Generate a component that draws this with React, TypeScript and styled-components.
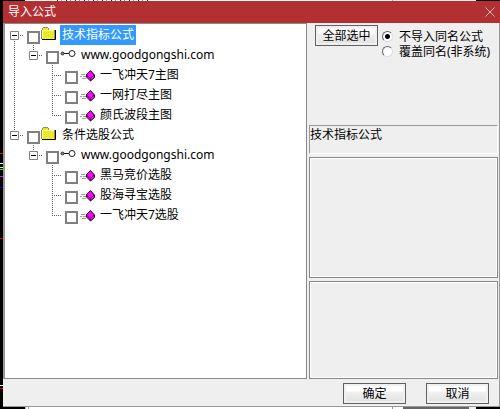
import React, { useState } from "react";
import styled, { createGlobalStyle, css } from "styled-components";

const GlobalStyle = createGlobalStyle`
  * { box-sizing: border-box; }
  body { margin: 0; background: #000; }
  body, button, input { font: 12px/20px "Noto Sans", "Noto Sans CJK SC", sans-serif; color: #000; }
`;

const Desktop = styled.div`
  display: grid;
  min-height: 100vh;
  padding: 1px 0 2px 3px;
  background:
    linear-gradient(#f00, #f00) 0 153px / 3px 1px,
    linear-gradient(#fff, #fff) 0 163px / 3px 1px,
    linear-gradient(#ff0, #ff0) 0 167px / 3px 1px,
    linear-gradient(#0f0, #0f0) 0 169px / 3px 1px,
    linear-gradient(#f0f, #f0f) 0 176px / 3px 1px,
    linear-gradient(#00f, #00f) 0 187px / 3px 1px,
    linear-gradient(#d00, #d00) 0 238px / 3px 1px,
    linear-gradient(#fff, #fff) 0 385px / 3px 1px,
    linear-gradient(#d00, #d00) 0 388px / 3px 1px,
    linear-gradient(90deg, #000 25px, #999 25px 26px, #fff 26px 28px, #999 28px 29px, #fff 29px 392px, #999 392px 393px, #fff 393px 403px, #666 403px 469px, #eee 469px 476px, #000 476px) 0 100% / 100% 2px,
    repeating-linear-gradient(90deg, #222 0 1px, #fff 1px 4px, #69c 4px 5px, #fff 5px 9px) 57px 0 / 91px 1px,
    linear-gradient(90deg, #000 25px, #fff 25px 392px, #999 392px 393px, #eee 393px 476px, #000 476px) 0 0 / 100% 1px,
    #000;
  background-repeat: no-repeat;
`;

const Dialog = styled.section`
  display: grid;
  grid-template-rows: 22px 1fr 27px;
  background: #efefef;
  border: solid #999;
  border-width: 0 1px 1px 0;
`;

const TitleBar = styled.header`
  display: flex;
  align-items: center;
  justify-content: space-between;
  margin-right: -1px;
  padding: 0 5px;
  background: #b22f32;
  color: #fff;
`;

const Title = styled.h1`
  margin: 0;
  font-size: 12px;
  font-weight: 400;
`;

const CloseButton = styled.button`
  display: flex;
  padding: 0;
  border: 0;
  background: none;
`;

const Body = styled.div`
  display: grid;
  grid-template-columns: minmax(0, 304fr) minmax(0, 192fr);
`;

const Tree = styled.ul`
  margin: 0;
  padding: 1px 0 0;
  list-style: none;
  background: #fff;
  border: 1px solid #888;
  border-left: 2px solid #999;
`;

const Row = styled.li`
  display: flex;
  height: 20px;
`;

const dotsV = "repeating-linear-gradient(#606060 0 1px, transparent 1px 2px)";
const dotsH = "repeating-linear-gradient(90deg, #606060 0 1px, transparent 1px 2px)";

type Line = "none" | "through" | "tee" | "corner" | "start";

const Guide = styled.span<{ $line: Line }>`
  display: flex;
  align-items: center;
  justify-content: center;
  width: 19px;
  flex: none;
  background-repeat: no-repeat;
  ${({ $line }) => $line === "through" && css`background-image: ${dotsV}; background-size: 1px 20px; background-position: 9px 0;`}
  ${({ $line }) => $line === "tee" && css`background-image: ${dotsV}, ${dotsH}; background-size: 1px 20px, 10px 1px; background-position: 9px 0, 9px 10px;`}
  ${({ $line }) => $line === "corner" && css`background-image: ${dotsV}, ${dotsH}; background-size: 1px 10px, 10px 1px; background-position: 9px 0, 9px 10px;`}
  ${({ $line }) => $line === "start" && css`background-image: ${dotsV}, ${dotsH}; background-size: 1px 10px, 10px 1px; background-position: 9px 10px, 9px 10px;`}
`;

const Expander = styled.button`
  display: flex;
  padding: 0;
  border: 0;
  background: none;
`;

const Check = styled.input`
  appearance: none;
  flex: none;
  width: 13px;
  height: 13px;
  margin: 6px 1px 0 3px;
  border: 2px solid #808080;
  background: #fff;
  &:checked { background: #808080; }
`;

const NodeIcon = styled.span`
  display: flex;
  flex: none;
  width: 19px;
  height: 20px;
`;

const NodeLabel = styled.label<{ $selected?: boolean }>`
  padding: 0 2px;
  white-space: nowrap;
  ${({ $selected }) => $selected && css`background: #3399ff; color: #fff;`}
`;

const Side = styled.div`
  display: grid;
  grid-template-rows: 99px 29px 122fr 98fr;
  padding: 0 1px 0 2px;
  row-gap: 3px;
`;

const Options = styled.div`
  display: flex;
  align-items: flex-start;
  padding: 2px 0 0 6px;
`;

const PushButton = styled.button`
  flex: none;
  width: 63px;
  height: 21px;
  padding: 0;
  line-height: 17px;
  border: 1px solid #606060;
  background: linear-gradient(#fff 0 35%, #f0f0f0 45%, #e0e0e0);
  box-shadow: inset 0 0 0 2px #f0f0f0;
`;

const RadioList = styled.div`
  display: grid;
  grid-auto-rows: 15px;
  margin: 4px 0 0 4px;
`;

const RadioLabel = styled.label`
  display: flex;
  align-items: center;
  gap: 6px;
  line-height: 15px;
  white-space: nowrap;
`;

const Radio = styled.input`
  appearance: none;
  flex: none;
  width: 11px;
  height: 11px;
  margin: 0;
  border: 1px solid;
  border-color: #606060 #ddd #ddd #606060;
  border-radius: 50%;
  background: #fff;
  &:checked { background: radial-gradient(circle, #000 0 2px, #fff 3px); }
`;

const GroupName = styled.output`
  display: block;
  line-height: 18px;
  border: 1px solid;
  border-color: #999 #fff #fff #999;
`;

const Pane = styled.div`
  border: 1px solid #888;
  box-shadow: inset 0 0 0 1px #fff;
`;

const Footer = styled.footer`
  display: flex;
  align-items: center;
  justify-content: flex-end;
  gap: 20px;
  padding: 1px 10px 0 0;
`;

const Folder = () => (
  <svg width="16" height="20" aria-hidden="true">
    <path d="M0 5h1V3h1V2h5v1h1v2h6v9H0z" fill="#8c8c70" />
    <path d="M2 3h5v2H2zM1 5h12v9H1z" fill="#f4f400" />
    <path d="M3 7.500h10M3 9.500h10M3 11.500h10M3 3.500h4" stroke="#d6d670" strokeDasharray="1 1" />
    <path d="M2 8.500h11M2 10.500h11M2 12.500h11" stroke="#e6e648" strokeDasharray="1 1" />
    <path d="M1.500 13V5.500H13" fill="none" stroke="#ffffb0" />
    <path d="M1 14.500h13.500V5" fill="none" stroke="#000" />
  </svg>
);

const Link = () => (
  <svg width="16" height="20" aria-hidden="true">
    <path d="M3 8.500h7" stroke="#111" fill="none" />
    <circle cx="2.500" cy="8.500" r="1.500" fill="#888" stroke="#333" />
    <circle cx="12" cy="8.500" r="3" fill="#fff" stroke="#222" />
  </svg>
);

const Gem = () => (
  <svg width="17" height="20" aria-hidden="true">
    <path d="M2 9.500h4M1 11.500h2M4 11.500h3M3 13.500h4" stroke="#999" />
    <path d="M11.500 5.500l4 4.500v2.500l-4 3.500-4-4V9.500z" fill="#ff00ff" stroke="#200020" />
    <path d="M8 10.500l3.500 3 3.500-3.500M11.500 13.500v2.500" fill="none" stroke="#600060" />
  </svg>
);

const icons = { folder: Folder, link: Link, gem: Gem };

type Node = { id: string; text: string; icon: keyof typeof icons; guides: Line[]; open?: boolean };

const nodes: Node[] = [
  { id: "a", text: "技术指标公式", icon: "folder", guides: ["start"], open: true },
  { id: "a0", text: "www.goodgongshi.com", icon: "link", guides: ["through", "corner"], open: true },
  { id: "a1", text: "一飞冲天7主图", icon: "gem", guides: ["through", "none", "tee"] },
  { id: "a2", text: "一网打尽主图", icon: "gem", guides: ["through", "none", "tee"] },
  { id: "a3", text: "颜氏波段主图", icon: "gem", guides: ["through", "none", "corner"] },
  { id: "b", text: "条件选股公式", icon: "folder", guides: ["corner"], open: true },
  { id: "b0", text: "www.goodgongshi.com", icon: "link", guides: ["none", "corner"], open: true },
  { id: "b1", text: "黑马竞价选股", icon: "gem", guides: ["none", "none", "tee"] },
  { id: "b2", text: "股海寻宝选股", icon: "gem", guides: ["none", "none", "tee"] },
  { id: "b3", text: "一飞冲天7选股", icon: "gem", guides: ["none", "none", "corner"] },
];

export default function App() {
  const [checked, setChecked] = useState<string[]>([]);
  const toggle = (id: string) =>
    setChecked((now) => (now.includes(id) ? now.filter((item) => item !== id) : [...now, id]));

  return (
    <Desktop>
      <GlobalStyle />
      <Dialog role="dialog" aria-labelledby="dialog-title">
        <TitleBar>
          <Title id="dialog-title">导入公式</Title>
          <CloseButton aria-label="关闭">
            <svg width="10" height="10" aria-hidden="true">
              <path d="M0.500 0.500l9 9M9.500 0.500l-9 9" stroke="#e5b9ba" />
            </svg>
          </CloseButton>
        </TitleBar>
        <Body>
          <Tree>
            {nodes.map((node) => {
              const Icon = icons[node.icon];
              return (
                <Row key={node.id}>
                  {node.guides.map((line, i) => (
                    <Guide key={i} $line={line}>
                      {node.open && i === node.guides.length - 1 && (
                        <Expander aria-label="折叠">
                          <svg width="9" height="9" aria-hidden="true">
                            <path d="M0.500 0.500h8v8h-8z" fill="#fff" stroke="#808080" />
                            <path d="M2 4.500h5" stroke="#000" />
                          </svg>
                        </Expander>
                      )}
                    </Guide>
                  ))}
                  <Check
                    id={node.id}
                    type="checkbox"
                    checked={checked.includes(node.id)}
                    onChange={() => toggle(node.id)}
                  />
                  <NodeIcon><Icon /></NodeIcon>
                  <NodeLabel htmlFor={node.id} $selected={node.id === "a"}>{node.text}</NodeLabel>
                </Row>
              );
            })}
          </Tree>
          <Side>
            <Options>
              <PushButton onClick={() => setChecked(nodes.map((node) => node.id))}>全部选中</PushButton>
              <RadioList role="radiogroup">
                <RadioLabel><Radio type="radio" name="mode" defaultChecked />不导入同名公式</RadioLabel>
                <RadioLabel><Radio type="radio" name="mode" />覆盖同名(非系统)</RadioLabel>
              </RadioList>
            </Options>
            <GroupName>技术指标公式</GroupName>
            <Pane />
            <Pane />
          </Side>
        </Body>
        <Footer>
          <PushButton>确定</PushButton>
          <PushButton>取消</PushButton>
        </Footer>
      </Dialog>
    </Desktop>
  );
}
